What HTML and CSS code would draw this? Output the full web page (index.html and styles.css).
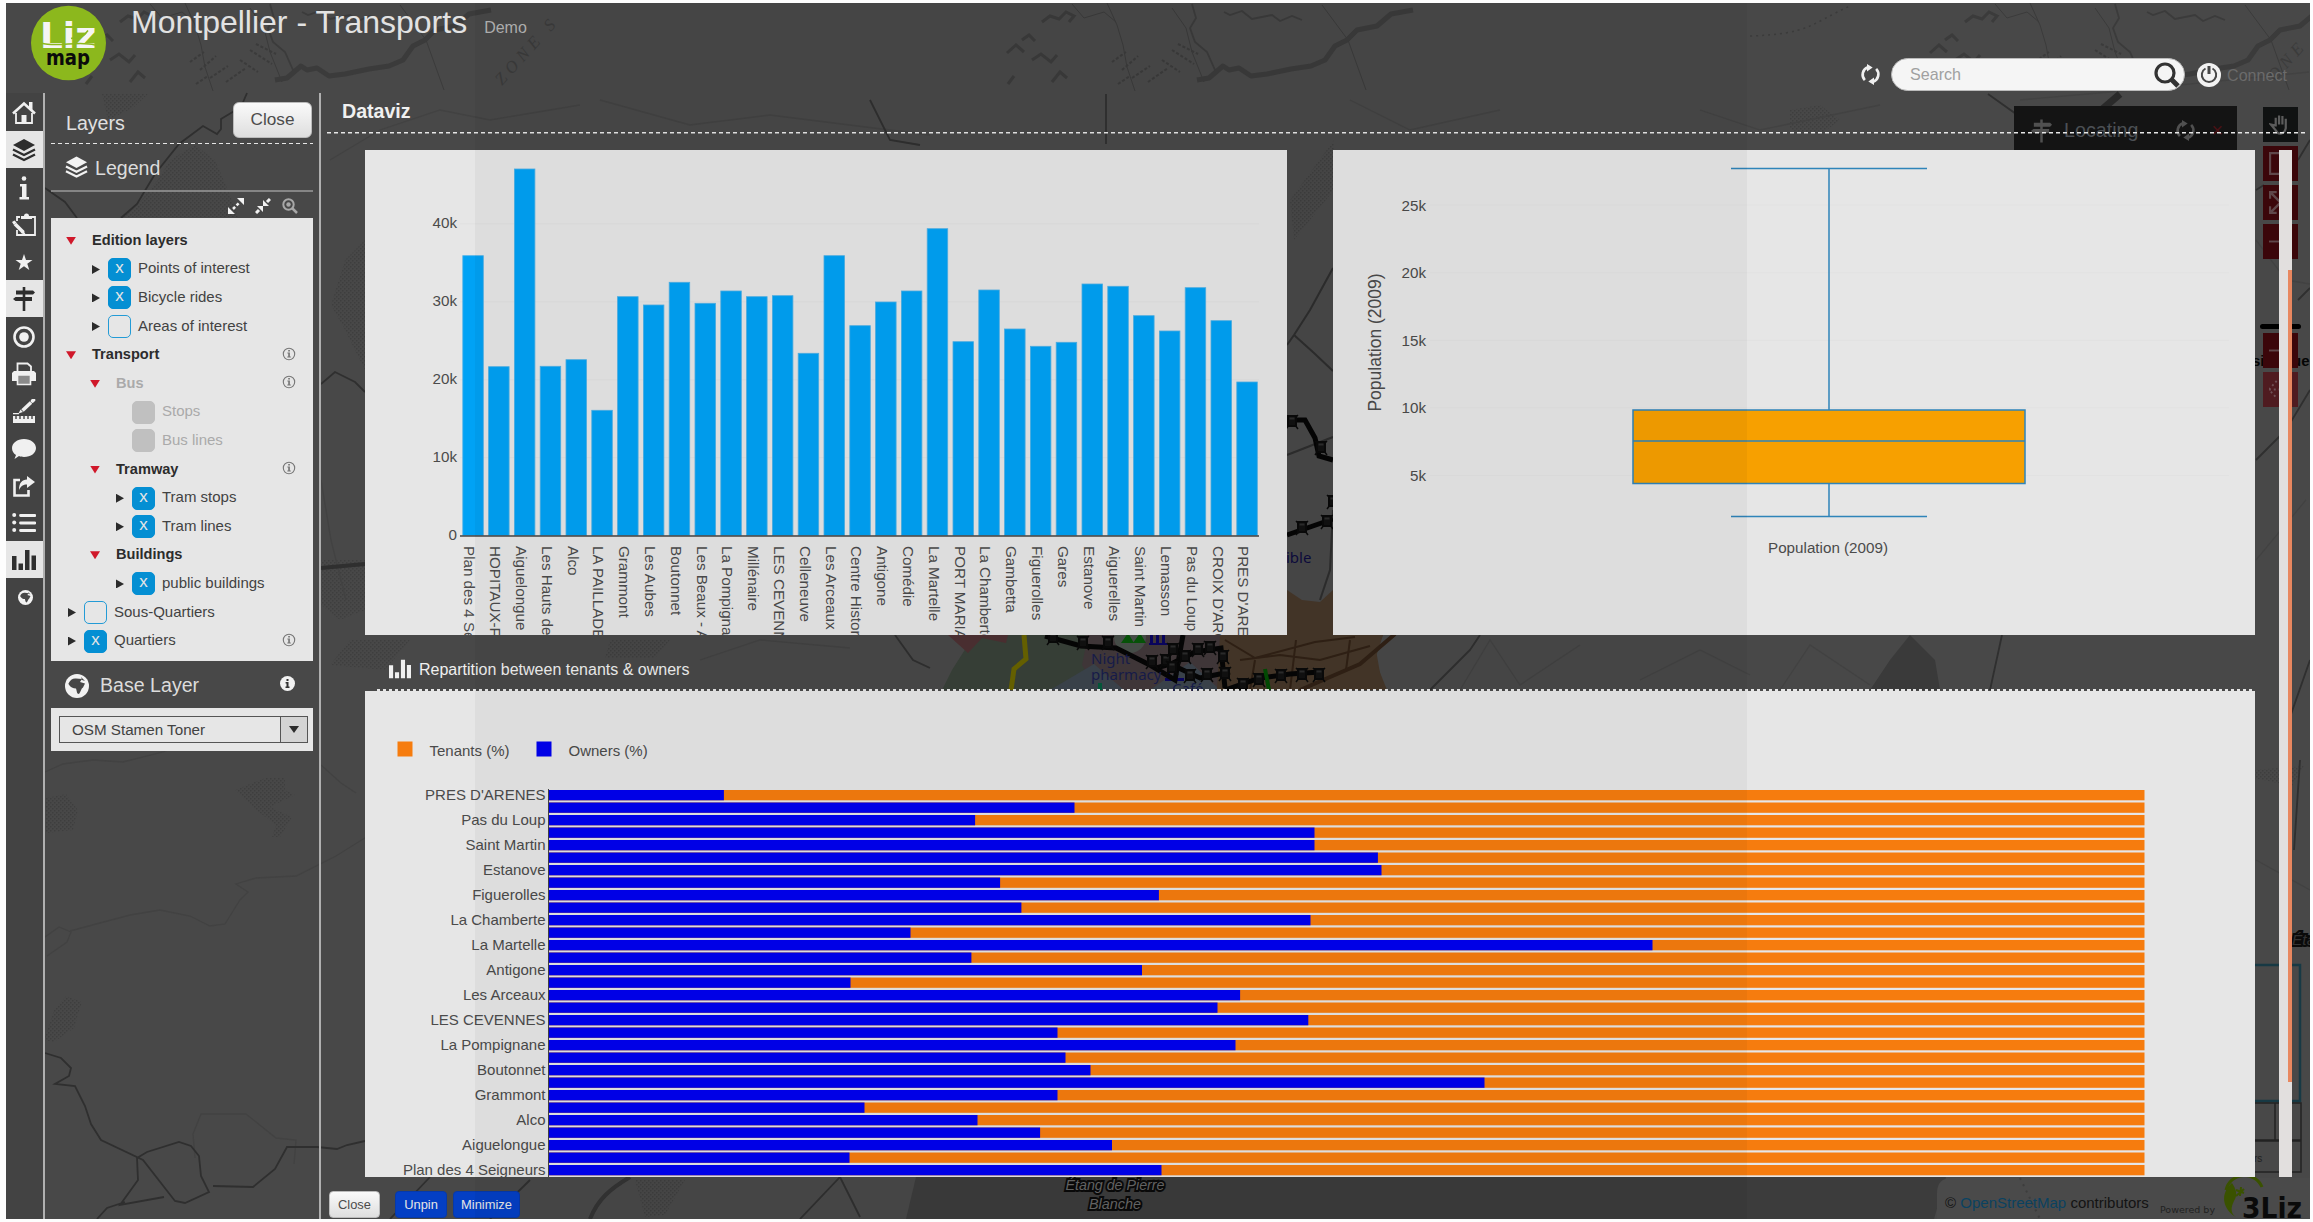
FILE: index.html
```html
<!DOCTYPE html>
<html lang="en">
<head>
<meta charset="utf-8">
<title>Montpellier - Transports</title>
<link rel="stylesheet" href="styles.css">
</head>
<body>
<svg class="defs" width="0" height="0" aria-hidden="true">
  <symbol id="i-home" viewBox="0 0 24 24"><path d="M4 12v10h16V12" fill="none" stroke="currentColor" stroke-width="1.800"/><path d="M1 12.500 12 2.500l11 10" fill="none" stroke="currentColor" stroke-width="2.600"/><path d="M17 1h3.500v8L17 6zM9.500 14h5v8h-5z" fill="currentColor"/></symbol>
  <symbol id="i-layers" viewBox="0 0 24 24"><path d="M12 1 23 7 12 13 1 7z" fill="currentColor"/><path d="m1 11.500 11 5.500 11-5.500M1 16.500 12 22l11-5.500" fill="none" stroke="currentColor" stroke-width="2.300"/></symbol>
  <symbol id="i-info" viewBox="0 0 24 24"><circle cx="12" cy="2.500" r="2.300" fill="currentColor"/><path d="M8 8h6.500v13H17v2.500H7.500V21H10V10.500H8z" fill="currentColor"/></symbol>
  <symbol id="i-edit" viewBox="0 0 24 24"><path d="M8 4H5v4M5 17v5h18V4h-4" fill="none" stroke="currentColor" stroke-width="1.800"/><path d="M9 6V3h3a2.500 2.500 0 0 1 5 0h3v3z" fill="currentColor"/><path d="m3 11 8.500 8.500" stroke="currentColor" stroke-width="3.600"/><path d="m11 17 3 5-5-2zM0 9l2.500-1.500 2 2L2 12z" fill="currentColor"/></symbol>
  <symbol id="i-star" viewBox="0 0 24 24"><path d="m12 4 2 6h6.500L15.300 13.800l2 6.200L12 16.200 6.700 20l2-6.200L3.500 10H10z" fill="currentColor"/></symbol>
  <symbol id="i-sign" viewBox="0 0 24 24"><path d="M10.700 0h2.600v24h-2.600zM4 3.500h17l2 2-2 2H4zM1 12l2.500-2H20v4H3.500z" fill="currentColor"/></symbol>
  <symbol id="i-target" viewBox="0 0 24 24"><circle cx="12" cy="12" r="9.500" fill="none" stroke="currentColor" stroke-width="2.600"/><circle cx="12" cy="12" r="4.800" fill="currentColor"/></symbol>
  <symbol id="i-print" viewBox="0 0 24 24"><path d="M5.500 9V1.500h10l3.500 3V9" fill="none" stroke="currentColor" stroke-width="1.800"/><path d="M2 9h20l2 2v8h-5v-5H5v5H0v-8z" fill="currentColor"/><path d="M5.500 13h13v9.500h-13z" fill="#8a8a8a" stroke="currentColor" stroke-width="1.600"/></symbol>
  <symbol id="i-measure" viewBox="0 0 24 24"><path d="M1 17h22v7H1z" fill="currentColor"/><path d="M4 17v3m4-3v3m4-3v3m4-3v3m4-3v3" stroke="#444" stroke-width="1.400"/><path d="m10.500 11.500 8.500-8" stroke="currentColor" stroke-width="3.600"/><path d="m20.500 2 1-1" stroke="currentColor" stroke-width="3.600" stroke-linecap="round"/><path d="m6.500 14.500 2-4 2.500 2.500zM1 14h6v1.200H1z" fill="currentColor"/></symbol>
  <symbol id="i-bubble" viewBox="0 0 24 24"><path d="M12 2c6.800 0 12 4 12 9s-5 9-12 9c-2 0-3.500-.3-5-.9L2.500 22 4 18C1.500 16.400 0 14 0 11c0-5 5.200-9 12-9z" fill="currentColor"/></symbol>
  <symbol id="i-share" viewBox="0 0 24 24"><path d="M8 6H2.500v15.500h14V16" fill="none" stroke="currentColor" stroke-width="2.600"/><path d="M15 2l8 6-8 6v-3.500c-4 0-6 1.500-8 5.500 0-7 3-10.500 8-10.500z" fill="currentColor"/></symbol>
  <symbol id="i-list" viewBox="0 0 24 24"><path d="M8.500 4.500h14.500M8.500 12h14.500M8.500 19.500h14.500" stroke="currentColor" stroke-width="2.800" stroke-linecap="round"/><g fill="currentColor"><circle cx="2.200" cy="4" r="2"/><circle cx="2.200" cy="11.500" r="2"/><circle cx="2.200" cy="19" r="2"/></g></symbol>
  <symbol id="i-bars" viewBox="0 0 24 24"><path d="M0 8h4.500v14H0zM6.500 15.500h4.500V22H6.500zM13 2h4.500v20H13zM19.500 7.500H24V22h-4.500z" fill="currentColor"/></symbol>
  <symbol id="i-globe" viewBox="0 0 24 24"><circle cx="12" cy="12" r="12" fill="#f2f2f2"/><path d="M3.500 9.500C5 6 8 4 11 4.500l6 .5-2 3 5 1.500-2 4c-2 1-2 4-4 6.500-2.500 0-2-3-3-5.500-3 0-5.500-1-7.500-4.500zM16 3l4 4-3-1z" fill="#474747"/></symbol>
  <symbol id="i-refresh" viewBox="0 0 24 24"><path d="M9 3.800A9 9 0 0 0 5.500 18.500M15 20.200A9 9 0 0 0 18.500 5.500" fill="none" stroke="currentColor" stroke-width="3"/><path d="M8 0l6.500 4L8 8.500zM16 24l-6.500-4L16 15.500z" fill="currentColor"/></symbol>
  <symbol id="i-roundinfo" viewBox="0 0 14 14"><circle cx="7" cy="7" r="5.700" fill="none" stroke="currentColor" stroke-width="1.100"/><path d="M6.200 3h1.700v1.500H6.200zM5.400 5.600h2.500v3.900h.9v1H5.300v-1h.9V6.600h-.8z" fill="currentColor"/></symbol>
</svg>

<div class="app">
  <svg class="map" viewBox="6 3 2304 1216" aria-hidden="true">
    <defs>
      <pattern id="dots" width="4" height="4" patternUnits="userSpaceOnUse"><path d="M0 0h1.500v1.500H0zM2 2h1.500v1.500H2z" fill="#3e3e3e"/></pattern>
      <g id="train"><path d="M-4-6h8v10h-8z" stroke="#0a0a0a" stroke-width="2" fill="#111"/><path d="M-6 7l3-4M6 7 3 3M-6-7l3 3M6-7 3-4" stroke="#0a0a0a" stroke-width="1.500" fill="none"/><path d="M-2.500-4.500h5v2h-5z" fill="#2c2c2c"/></g>
      <g id="relief" fill="none" stroke="#3b3b3b">
        <path d="M120 22l8-6 9 3 7-7 8 4-5 6M100 40l7-5 6 6m-28 12 9-8 8 7M110 60l9-6 10 8 6-7M130 82l8-10 7 6M86 84l6-8" stroke-width="3"/>
        <path d="M185 3l10 22 6 20 4 22 8 24M250 8l14 20 6 24 12 30M400 5l26 35 18 50M150 4l12 14 20-6 12 10" stroke-width="1"/>
        <path d="M275 80l12-2 14-12 6 4 10-2 12 8 16-2 24-5 20-3 14-6 10-14 12-6 10-10 20-4 14-12 22-4" stroke-width="5" stroke-linejoin="round"/>
        <path d="M302 12l6 3 12-4 10 8 20-4 8 6 12-5 10 4M270 4l4 14-6 10 5 14 12 10 8 18" stroke-width="1.800"/>
        <path d="M190 62l14-10M200 70l16-14M210 78l18-12M226 82l20-14M196 84l12-8M240 60l18 12M250 50l22 14M256 44l20 10" stroke-width="2" stroke-dasharray="3 2"/>
      </g>
    </defs>
    <rect x="6" y="3" width="2304" height="1216" fill="#484848"/>
    <g class="header-relief">
      <use href="#relief"/><use href="#relief" x="922"/><use href="#relief" x="1845"/>
      <text class="relief-name" transform="translate(502 86) rotate(-48)">ZONE S</text>
      <text class="relief-name" transform="translate(2275 82) rotate(-48)">ONE</text>
      <path d="M1750 36c60-2 60-12 100-30" fill="none" stroke="#3b3b3b" stroke-width="1.500" stroke-dasharray="2 4"/>
    </g>
    <g fill="url(#dots)">
      <path d="M170 160l25-15 20 15 15 35 8 22H120l20-15 20-25zM102 94h46l-15 14-25 12z"/>
      <path d="M345 260l20-20v130l-20-40-14-25zM321 560h44v50l-25 10-19-15zM1790 110l30-5 20 15-20 15-30-5zM1290 200l44-60v50l-40 50z"/>
      <path d="M46 798l20-4 12 16-5 20-27 3zM235 790l30-12 20 0v12l10 5-25 12 22 10-12 20-8 0 4-12-20-15zM54 1010l12-14 16 6-8 26-20 14-10-2zM350 640h60l-25 30-55-5zM610 640h60l-15 18-50 0z"/>
      <path d="M635 1180h50l-20 35-20 2zM2254 770l50-4-12 20-38-8z"/>
    </g>
    <g fill="none" stroke="#424242" stroke-width="1.300">
      <path d="M45 772l18-8 30-4 30 2 40-10 40-15M45 937l14-10 12 5-4 10-20 14M70 931l60-16 30-5 30 6 20 10 15-2 15-24 8-8-12-8 20-6 40-2 40-20 40-25 26-15M321 765l20 18 15 10M246 1114l-45 0-8 20 2 24M246 1114l30 24 20 2-2 24M321 480l10 60 15 60M700 660l60-20 90 8M1460 690l30-50 30 45 60-40M1640 680l60-30 50 25M1780 690l30-45 60 40M2256 560l50-60M2256 860l54 30M2256 240l30 40 24 4"/>
      <path d="M330 160l50-30 60-20 50 10 90-15M600 100l90 25 80-10 160 20M1350 100l60 30 90-20M1700 110l60 20 120-25M2020 100l90-8 199-20"/>
    </g>
    <g fill="none" stroke="#2f2f2f" stroke-width="1.800">
      <path d="M247 93l-6 14-20 12 0 10-4 5-14-8-24 18-24 30-18 30-16 14M45 188l20 14 12 16M45 1053l16 5 10 10-2 8-14 8 20 2 10 20 6 18 10 16 42 20 32 41 10 2 24-11-8-16-2-20-8-10-12-4-32 10-10 6 1 22-18 25 44-8M125 1202l-18 6-10 11M213 1186l40 1 22-18 12-22 30 0 20 2 10-4 18-4"/>
      <path d="M321 384l14-12 20 10 10 10M870 100l20 40 30 5M1106 94l0 50M895 635l18 25 17 8M1430 690l40-40 10-15M1990 690l12-55M1988 94l35 25 20 31M2256 190l8-5M2298 160l12-20M2298 300l12-12M2256 460l30-30 24-40M2282 740l28-80M2300 760l-6 90M390 1219l40-42M530 1180l-40 39M800 1219l40-42 20 40"/>
      <path d="M321 568l44-4" stroke-width="4"/>
    </g>
    <path d="M590 1219c8-20 20-30 40-42" fill="none" stroke="#333" stroke-width="4"/>
    <path d="M2120 94l-70 60" stroke="#2a2a2a" stroke-width="7"/>
    <path d="M1870 690l20-30 20-25 25 25 5 30z" fill="#3a3a3a"/>
    <path d="M906 1219l10-42h1030l-12 42z" fill="#3c3c3c"/>
    <g fill="none" stroke="#2d2d2d" stroke-width="2"><path d="M1287 345l7-10 16-25 23-42M1294 335l20 18 19 18M1287 455l46-18M1320 600l10-30 3-60"/></g>
    <g fill="none" stroke="#050505" stroke-width="5"><path d="M1287 420h18l10 18 4 18 14 4M1287 535l46-16"/></g>
    <use href="#train" x="1292" y="422"/><use href="#train" x="1321" y="448"/><use href="#train" x="1302" y="528"/><use href="#train" x="1327" y="522"/><use href="#train" x="1333" y="502"/>
    <text class="place" x="1286" y="563">ible</text>
    <path d="M1287 590l15 10 18 2 13-12v45h50l-7 15 7 40h-170V600z" fill="#453729"/>
    <path d="M950 635h260v55H942l10-20 14-22z" fill="#394139"/>
    <path d="M948 635h60l-2 8-24-5-14 15z" fill="#4d3032"/>
    <path d="M1085 635h150l-10 20 12 35h-140l-15-25 4-20z" fill="#42393b"/>
    <path d="M1050 690l44-26 30 26z" fill="#3c444c"/><path d="M1150 690l40-28 30 28z" fill="#3c444c"/>
    <path d="M1220 635h163l-8 25 12 30h-170z" fill="#453729"/>
    <g fill="none" stroke="#302115" stroke-width="2"><path d="M1225 640l30 18 60-16 40-5M1240 660l40-5 40 5 50-14M1250 690l5-30M1290 690l6-50M1350 640l-4 30"/><path d="M1300 690l60-26 35-30" stroke-width="4"/></g>
    <path d="M1024 635l2 24-12 10-3 21" fill="none" stroke="#696300" stroke-width="5"/>
    <circle cx="1130" cy="637" r="16" fill="#48504a"/>
    <path d="M1121 643l7-10 6 10zM1133 643l7-10 6 10z" fill="#075609"/><path d="M1098 690v-7h4v7z" fill="#045a3c"/>
    <path d="M1149 643h22v2h-22zm1-8h3v8h-3zm6 0h3v8h-3zm6 0h3v8h-3zM1165 678h19v3h-19zm2-10h3v10h-3z" fill="#0a0560"/>
    <path d="M1045 636l36 10 35 2 20 10 20 10 15-4 24-12 26-4 4 40M1170 664l30 14 30-6M1225 690l35-12 30-4 30-2M1150 665l25 15 8-45" fill="none" stroke="#060606" stroke-width="5"/>
    <text class="place place-small" x="1091" y="664">Night</text><text class="place place-small" x="1091" y="680">pharmacy</text><text class="place place-small" x="1172" y="694">Café</text>
    <g><use href="#train" x="1053" y="638"/><use href="#train" x="1083" y="643"/><use href="#train" x="1108" y="643"/><use href="#train" x="1152" y="662"/><use href="#train" x="1166" y="661"/><use href="#train" x="1173" y="650"/><use href="#train" x="1185" y="657"/><use href="#train" x="1198" y="650"/><use href="#train" x="1210" y="648"/><use href="#train" x="1223" y="657"/><use href="#train" x="1225" y="674"/><use href="#train" x="1190" y="676"/><use href="#train" x="1207" y="675"/><use href="#train" x="1172" y="668"/><use href="#train" x="1243" y="685"/><use href="#train" x="1259" y="680"/><use href="#train" x="1281" y="676"/><use href="#train" x="1302" y="675"/><use href="#train" x="1319" y="675"/></g>
    <path d="M1265 669l4 21" stroke="#034c04" stroke-width="4"/>
    <g class="water-name"><text x="1115" y="1190" textLength="99" lengthAdjust="spacingAndGlyphs">Étang de Pierre</text><text x="1115" y="1209" textLength="52" lengthAdjust="spacingAndGlyphs">Blanche</text></g>
    <text class="water-name water-edge" x="2292" y="945">Éta</text>
    <text class="town" x="2252" y="366">si</text><text class="town" x="2292" y="366">ue</text>
    <g fill="none"><path d="M2250 965h50v136h-50" stroke="#173944" stroke-width="2.500"/><path d="M2250 1103h51v37h-51m25-37v37M2250 1141h51v31h-51" stroke="#222" stroke-width="1.500"/></g>
    <text class="scale-name" x="2254" y="1162">rs</text>
    <path d="M1937 1219v-26q0-15 15-15h358v41z" fill="#4a4a4a"/>
    <path d="M2020 1178l20 41" stroke="#3d3d3d" stroke-width="2" stroke-dasharray="2 5"/>
    <path d="M2236 1217c-14-8-16-24-4-34 4 6 6 12 2 18-3 6-4 12 2 16z" fill="#3a5200"/><path d="M2226 1190a19 19 0 0 1 36-3" fill="none" stroke="#3a5200" stroke-width="3"/><path d="m2236 1190 8 3m-3-6-1 9m4-7-8 7" stroke="#3a5200" stroke-width="2"/>
    <text class="brand-foot" x="2242" y="1218" textLength="60" lengthAdjust="spacingAndGlyphs">3Liz</text>
  </svg>

  <div class="locating"><svg class="locate-sign"><use href="#i-sign"/></svg><span>Locating</span><svg class="locate-refresh"><use href="#i-refresh"/></svg><b>×</b></div>
  <div class="tools">
    <i class="tool hand"><svg viewBox="0 0 24 24"><path d="M7 14V5m3.500 7V2.500M14 12V3m3.500 10V6M7 13l-5-1 5 6c2 5 9 5 10.500-2v-3" fill="none" stroke="#5c5c5c" stroke-width="2.300"/></svg></i>
    <i class="tool"><svg viewBox="0 0 24 24"><path d="M1 1h22v22H1z" fill="none" stroke="#60474a" stroke-width="2.500"/></svg></i>
    <i class="tool"><svg viewBox="0 0 24 24"><path d="M1 8V1h7M16 1h7v7M1 16v7h7m8 0h7v-7M2 2l20 20M22 2 2 22" fill="none" stroke="#60474a" stroke-width="2.500"/></svg></i>
    <i class="tool"><svg viewBox="0 0 24 24"><path d="M0 12h24" stroke="#60474a" stroke-width="2"/></svg></i>
    <i class="tool-bar"></i>
    <i class="tool"><svg viewBox="0 0 24 24"><path d="M0 12h24" stroke="#60474a" stroke-width="2"/></svg></i>
    <i class="tool pale"><svg viewBox="0 0 24 24"><path d="M0 12h24M8 3 0 12l8 9" fill="none" stroke="#705055" stroke-width="2" stroke-dasharray="2 3"/></svg></i>
  </div>

  <header class="header">
    <svg class="logo" viewBox="0 0 75 75"><ellipse cx="37.500" cy="37.500" rx="37.500" ry="37.300" fill="#8cb81d"/><text class="logo-liz" x="9" y="42" textLength="56" lengthAdjust="spacingAndGlyphs">Liz</text><path d="M10 37.500c18 5 36-3 54 2" fill="none" stroke="#8cb81d" stroke-width="1.500"/><path d="M40 33c6-2 10 2 17-8" fill="none" stroke="#8cb81d" stroke-width="1.500"/><text class="logo-map" x="15" y="59" textLength="44" lengthAdjust="spacingAndGlyphs">map</text></svg>
    <div class="titles"><h1>Montpellier - Transports</h1><span>Demo</span></div>
    <div class="header-tools">
      <svg class="refresh"><use href="#i-refresh"/></svg>
      <div class="search"><span>Search</span><svg viewBox="0 0 26 26"><circle cx="11" cy="11" r="9" fill="none" stroke="#333" stroke-width="3.200"/><path d="m17 17 7 7" stroke="#333" stroke-width="5"/></svg></div>
      <svg class="power" viewBox="0 0 24 24"><circle cx="12" cy="12" r="12" fill="#f2f2f2"/><path d="M8.500 5.500a7.200 7.200 0 1 0 7 0" fill="none" stroke="#474747" stroke-width="2"/><path d="M12 3v8" stroke="#474747" stroke-width="3"/></svg>
      <span class="connect">Connect</span>
    </div>
  </header>

  <div class="body">
    <nav class="dock">
      <a><svg><use href="#i-home"/></svg></a>
      <a class="on"><svg><use href="#i-layers"/></svg></a>
      <a><svg><use href="#i-info"/></svg></a>
      <a><svg><use href="#i-edit"/></svg></a>
      <a><svg><use href="#i-star"/></svg></a>
      <a class="on"><svg><use href="#i-sign"/></svg></a>
      <a><svg><use href="#i-target"/></svg></a>
      <a><svg><use href="#i-print"/></svg></a>
      <a><svg><use href="#i-measure"/></svg></a>
      <a><svg><use href="#i-bubble"/></svg></a>
      <a><svg><use href="#i-share"/></svg></a>
      <a><svg><use href="#i-list"/></svg></a>
      <a class="on"><svg><use href="#i-bars"/></svg></a>
      <a class="small"><svg><use href="#i-globe"/></svg></a>
    </nav>

    <aside class="panel">
      <div class="panel-head"><span>Layers</span><button class="btn">Close</button></div>
      <div class="legend-head"><svg><use href="#i-layers"/></svg><span>Legend</span></div>
      <div class="tree-tools">
        <svg viewBox="0 0 16 16"><path d="m5 11 6-6" stroke="#f2f2f2" stroke-width="2.500" stroke-dasharray="3 2"/><path d="M9 0h7v7zM0 9v7h7z" fill="#f2f2f2"/></svg>
        <svg viewBox="0 0 16 16"><path d="M1 15l3-3m8-8 3-3" stroke="#f2f2f2" stroke-width="3"/><path d="M8 2v6h6zM2 8h6v6z" fill="#f2f2f2"/></svg>
        <svg viewBox="0 0 16 16"><circle cx="6.500" cy="6.500" r="5.200" fill="none" stroke="#a8a8a8" stroke-width="2"/><circle cx="6.500" cy="6.500" r="2.200" fill="#a8a8a8"/><path d="m10 10 5 5" stroke="#a8a8a8" stroke-width="2.500"/></svg>
      </div>
      <div class="tree">
        <div class="row group l0"><i class="open"></i><b>Edition layers</b></div>
        <div class="row l1"><i class="shut"></i><u class="on">x</u><span>Points of interest</span></div>
        <div class="row l1"><i class="shut"></i><u class="on">x</u><span>Bicycle rides</span></div>
        <div class="row l1"><i class="shut"></i><u></u><span>Areas of interest</span></div>
        <div class="row group l0"><i class="open"></i><b>Transport</b><svg><use href="#i-roundinfo"/></svg></div>
        <div class="row group l1 off"><i class="open"></i><b>Bus</b><svg><use href="#i-roundinfo"/></svg></div>
        <div class="row l2 off"><i></i><u></u><span>Stops</span></div>
        <div class="row l2 off"><i></i><u></u><span>Bus lines</span></div>
        <div class="row group l1"><i class="open"></i><b>Tramway</b><svg><use href="#i-roundinfo"/></svg></div>
        <div class="row l2"><i class="shut"></i><u class="on">x</u><span>Tram stops</span></div>
        <div class="row l2"><i class="shut"></i><u class="on">x</u><span>Tram lines</span></div>
        <div class="row group l1"><i class="open"></i><b>Buildings</b></div>
        <div class="row l2"><i class="shut"></i><u class="on">x</u><span>public buildings</span></div>
        <div class="row l0"><i class="shut"></i><u></u><span>Sous-Quartiers</span></div>
        <div class="row l0"><i class="shut"></i><u class="on">x</u><span>Quartiers</span><svg><use href="#i-roundinfo"/></svg></div>
      </div>
      <div class="base-head"><svg class="globe"><use href="#i-globe"/></svg><span>Base Layer</span><svg class="dot" viewBox="0 0 15 15"><circle cx="7.500" cy="7.500" r="7.500" fill="#f2f2f2"/><path d="M6.500 3h2v2h-2zM5.600 6h2.900v4.500h1V12h-4v-1.500h1v-3h-.9z" fill="#333"/></svg></div>
      <div class="base-box"><div class="select"><span>OSM Stamen Toner</span><i></i></div></div>
    </aside>

    <main class="dataviz">
      <h2>Dataviz</h2>
      <div class="scroller">
        <div class="plots">
          <div class="plot-row">
            <svg class="plot" id="bars" viewBox="365 150 922 485"></svg>
            <svg class="plot" id="box" viewBox="1333 150 922 485"></svg>
          </div>
          <div class="plot-title"><svg><use href="#i-bars"/></svg><span>Repartition between tenants &amp; owners</span></div>
          <svg class="plot wide" id="share" viewBox="365 691 1890 486"></svg>
        </div>
        <div class="scrollbar"><i></i></div>
      </div>
      <footer class="foot">
        <button class="btn">Close</button><button class="btn blue">Unpin</button><button class="btn blue">Minimize</button>
        <p class="credits">© <a>OpenStreetMap</a> contributors <small>Powered by</small></p>
      </footer>
    </main>
  </div>
  <div class="tile-shade"></div>
</div>
<script src="charts.js"></script>
</body>
</html>
```
FILE: styles.css
```css
* { box-sizing: border-box; }
body { margin: 0; background: #fdfdfd; font-family: "Liberation Sans", Arial, sans-serif; overflow: hidden; }
.defs { position: absolute; }
.app { position: relative; width: 2304px; height: 1216px; margin: 3px 0 0 6px; background: #484848; overflow: hidden; color: #f0f0f0; display: flex; flex-direction: column; }
.map { position: absolute; inset: 0; width: 2304px; height: 1216px; }
.tile-shade { position: absolute; left: 469px; top: 0; width: 1272px; height: 1216px; background: rgba(0, 0, 0, .04); }
.relief-name { font: italic 17px "Liberation Serif", serif; letter-spacing: 5px; fill: #3b3b3b; }
.place { font: 15px "Noto Sans", sans-serif; fill: #0d0b3e; }
.place-small { font-size: 15px; fill: #181d4b; }
.water-name { font: italic 15.500px "Liberation Sans", sans-serif; text-anchor: middle; fill: #666; stroke: #0a0a0a; stroke-width: 4px; paint-order: stroke; }
.water-edge { text-anchor: start; fill: #333; }
.town { font: bold 15px "Liberation Sans", sans-serif; fill: #050505; }
.scale-name { font: 10px "Liberation Sans", sans-serif; fill: #222; }
.brand-foot { font: bold 28px "DejaVu Sans", sans-serif; fill: #0a0a0a; }

.locating { position: absolute; left: 2008px; top: 103px; width: 223px; height: 45px; background: #141414; color: #4c5055; display: flex; align-items: center; padding: 4px 14px 0 16px; font-size: 19.700px; }
.locating .locate-sign { width: 23px; height: 24px; color: #505050; margin-right: 11px; }
.locating .locate-refresh { width: 21px; height: 21px; color: #505050; margin-left: 37px; }
.locating b { color: #4a1114; font-weight: normal; margin-left: 15px; }
.tools { position: absolute; left: 2257px; top: 104px; width: 35px; display: flex; flex-direction: column; gap: 4px; }
.tool { height: 35px; background: #3b060a; display: flex; align-items: center; justify-content: center; }
.tool svg { width: 23px; height: 23px; }
.tool.hand { background: #101212; }
.tool.pale { background: #4f1b20; }
.tool-bar { height: 5px; margin: 61px -3px 0; border-radius: 3px; background: #000; }

.header { position: relative; height: 90px; flex: none; display: flex; padding-left: 25px; }
.logo { width: 75px; height: 76px; margin-top: 2px; }
.logo-liz { font: bold 35px "DejaVu Sans", sans-serif; fill: #f5f5f5; }
.logo-map { font: bold 21px "DejaVu Sans", sans-serif; fill: #0b0b0b; }
.titles { display: flex; align-items: baseline; margin-left: 25px; height: 40px; }
.titles h1 { margin: 1px 0 0; font-size: 32px; line-height: 36px; font-weight: normal; color: #e2e2e2; }
.titles span { font-size: 16px; margin-left: 17px; color: #b4b4b4; }
.header-tools { margin: 55px 23px 0 auto; height: 33px; display: flex; align-items: center; }
.refresh { width: 21px; height: 23px; margin-right: 10px; }
.search { width: 294px; height: 33px; border-radius: 17px; background: #f5f5f5; border: 1px solid #bbb; display: flex; align-items: center; justify-content: space-between; padding: 0 4px 0 18px; color: #a0a0a0; font-size: 16.100px; }
.search svg { width: 26px; height: 26px; }
.power { width: 24px; height: 24px; margin: 0 6px 0 12px; }
.connect { font-size: 16.100px; color: #6b6b6b; padding-top: 1px; }

.body { position: relative; flex: 1; display: flex; min-height: 0; }
.dock { width: 39px; flex: none; border-right: 2px solid #b0b0b0; background: #434343; padding-top: .5px; }
.dock a { display: flex; height: 37.270px; align-items: center; justify-content: center; padding: 2px 1px 0 0; }
.dock svg { width: 24px; height: 24px; }
.dock .on { background: #e6e6e6; color: #2e2e2e; }
.dock .small svg { width: 15px; height: 15px; }
.dock .small { padding-left: 3px; }

.panel { width: 276px; flex: none; border-right: 2px solid #b0b0b0; padding: 0 6px; }
.panel-head { height: 51px; display: flex; align-items: center; justify-content: space-between; padding-left: 15px; font-size: 19.600px; background: repeating-linear-gradient(90deg, #e6e6e6 0 4px, transparent 4px 7px) 0 49.500px / 100% 1.500px no-repeat; color: #e0e0e0; }
.panel-head span { padding-top: 9px; }
.btn { font-family: inherit; color: #4c4c4c; border: 1px solid #bbb; background: linear-gradient(#fafafa, #dedede); border-radius: 4px; padding: 0; }
.panel-head .btn { width: 79px; height: 36px; font-size: 17.200px; border-radius: 6px; margin: 2px 1px 0 0; }
.legend-head { height: 48px; border-bottom: 2px solid #858585; display: flex; align-items: center; padding-left: 14px; font-size: 19.600px; color: #dcdcdc; }
.legend-head svg { width: 23px; height: 24px; margin-right: 7px; color: #f2f2f2; }
.legend-head span { padding-top: 2px; }
.tree-tools { height: 26px; display: flex; justify-content: flex-end; gap: 11px; padding: 6px 15px 0 0; }
.tree-tools svg { width: 16px; height: 16px; }
.tree { background: #e6e6e6; height: 443px; padding-top: 7px; color: #424242; font-size: 15px; }
.row { height: 28.600px; display: flex; align-items: center; }
.row.l0 { padding-left: 17px; }
.row.l1 { padding-left: 41px; }
.row.l2 { padding-left: 65px; }
.row.group { padding-left: 15px; }
.row.group.l1 { padding-left: 39px; }
.row i { width: 8px; height: 9px; margin-right: 8px; flex: none; }
.row .shut { background: #2b2b2b; clip-path: polygon(0 0, 100% 50%, 0 100%); margin-top: 3px; }
.row .open { width: 10px; height: 8px; background: #d0182a; clip-path: polygon(0 0, 100% 0, 50% 100%); margin: 3px 16px 0 0; }
.row u { width: 23px; height: 23px; border: 1.500px solid #239bd6; border-radius: 5px; text-decoration: none; color: #e6e6e6; font-size: 17px; line-height: 18px; text-align: center; margin: 3px 7px 0 0; }
.row u.on { background: #048fd3; border-color: #048fd3; }
.row b { font-size: 14.600px; color: #2c2c2c; padding-top: 1px; }
.row.off b, .row.off span { color: #aaa; }
.row.off u { background: #c0c0c0; border-color: #c0c0c0; }
.row svg { width: 14px; height: 14px; margin: 0 17px 0 auto; color: #777; }
.base-head { height: 47px; display: flex; align-items: center; padding: 2px 18px 0 14px; color: #dcdcdc; font-size: 19.600px; }
.base-head .globe { width: 24px; height: 24px; margin-right: 11px; }
.base-head .dot { width: 15px; height: 15px; margin: -4px 0 0 auto; }
.base-box { height: 43px; background: #e6e6e6; padding: 8px 5px 8px 8px; }
.select { height: 27px; border: 1px solid #555; display: flex; align-items: center; color: #424242; font-size: 15.200px; padding-left: 12px; }
.select i { width: 27px; height: 25px; margin-left: auto; border-left: 1px solid #555; background: #d4d4d4; display: flex; align-items: center; justify-content: center; }
.select i::before { content: ""; border: 5px solid transparent; border-top: 7px solid #2b2b2b; border-bottom: 0; }

.dataviz { flex: 1; min-width: 0; display: flex; flex-direction: column; }
.dataviz h2 { margin: 0 4px 0 6px; height: 41px; padding: 6px 0 0 15px; font-size: 19.600px; line-height: 24px; flex: none; background: repeating-linear-gradient(90deg, #e6e6e6 0 4px, transparent 4px 7px) 0 38.500px / 100% 1.500px no-repeat; }
.scroller { margin: 16px 0 0 44px; height: 1027px; flex: none; display: flex; gap: 24px; overflow: hidden; }
.plots { width: 1890px; }
.plot-row { display: flex; justify-content: space-between; height: 485px; }
.plot { display: block; width: 922px; height: 485px; background: #e6e6e6; }
.plot.wide { width: 1890px; height: 486px; }
.plot-title { height: 56px; display: flex; align-items: center; padding-left: 23px; font-size: 16px; background: repeating-linear-gradient(90deg, #e6e6e6 0 3.500px, transparent 3.500px 6px) 12px 54px / 100% 2px no-repeat; }
.plot-title svg { width: 24px; height: 22px; margin: 12px 7px 0 0; }
.plot-title span { padding-top: 13px; }
.scrollbar { width: 13px; background: #e2dfde; padding: 120px 0 0 9px; }
.scrollbar i { display: block; width: 4px; height: 812px; background: #e8875f; }
.plot text { font: 15.200px "Liberation Sans", Arial, sans-serif; fill: #4b4b4b; }
.plot .end { text-anchor: end; }
.plot .mid { text-anchor: middle; }
.plot text.axis-title { font-size: 17.500px; }
.plot text.sm { font-size: 15px; }

.foot { display: flex; align-items: flex-start; padding: 14px 0 0 8px; }
.foot .btn { width: 51px; height: 27px; font-size: 12.900px; margin-right: 15px; }
.foot .btn.blue { width: 52px; color: #e6e6e6; background: #043fc4; border-color: #0739a8; margin-right: 6px; }
.foot .btn.blue + .blue { width: 67px; margin: 0; }
.credits { margin: 3px 0 0 auto; padding-right: 95px; font-size: 15px; line-height: 18px; color: #131313; white-space: nowrap; }
.credits a { color: #0a4261; }
.credits small { font: 9.500px "DejaVu Sans", sans-serif; color: #222; margin-left: 7px; position: relative; top: 5px; }
```
FILE: charts.js
```js
(function () {
  var NS = "http://www.w3.org/2000/svg";

  function add(svg, name, attrs, text) {
    var el = document.createElementNS(NS, name);
    for (var k in attrs) el.setAttribute(k, attrs[k]);
    if (text !== undefined) el.textContent = text;
    svg.appendChild(el);
  }

  // Population per district
  var districts = [
    ["Plan des 4 Seigneurs", 255.7], ["HOPITAUX-FACULTES", 366.7], ["Aiguelongue", 169],
    ["Les Hauts de Massane", 366.3], ["Alco", 359.7], ["LA PAILLADE", 410.3],
    ["Grammont", 296.7], ["Les Aubes", 305], ["Boutonnet", 282.3], ["Les Beaux - Arts", 303.3],
    ["La Pompignane", 291], ["Millénaire", 296.7], ["LES CEVENNES", 295.7],
    ["Celleneuve", 353.3], ["Les Arceaux", 255.7], ["Centre Historique", 325.7],
    ["Antigone", 302], ["Comédie", 291], ["La Martelle", 228.7], ["PORT MARIANNE", 341.7],
    ["La Chamberte", 290], ["Gambetta", 329], ["Figuerolles", 346.3], ["Gares", 342.3],
    ["Estanove", 284], ["Aiguerelles", 286.3], ["Saint Martin", 315.7], ["Lemasson", 331],
    ["Pas du Loup", 287.7], ["CROIX D'ARGENT", 320.7], ["PRES D'ARENES", 382]
  ];
  var bars = document.getElementById("bars");
  ["0", "10k", "20k", "30k", "40k"].forEach(function (t, i) {
    var y = 535.5 - 77.9 * i;
    add(bars, "path", { d: "M460 " + y + "h799", stroke: "#e0e0e0" });
    add(bars, "text", { x: 457, y: y + 4.5, "class": "end" }, t);
  });
  districts.forEach(function (d, i) {
    var x = 462.8 + 25.8 * i;
    add(bars, "rect", { x: x, y: d[1], width: 20.5, height: 535.5 - d[1], fill: "#00a2f5", stroke: "#4db1e8", "stroke-width": 0.8 });
    add(bars, "text", { transform: "translate(" + (x + 1.6) + " 546) rotate(90)" }, d[0]);
  });
  add(bars, "path", { d: "M460 536h799", stroke: "#444", "stroke-width": 1.3 });

  // Box plot of the same population
  var box = document.getElementById("box");
  ["5k", "10k", "15k", "20k", "25k"].forEach(function (t, i) {
    var y = 475.5 - 67.6 * i;
    add(box, "path", { d: "M1430 " + y + "h799", stroke: "#e2e2e2" });
    add(box, "text", { x: 1426, y: y + 5.5, "class": "end" }, t);
  });
  add(box, "rect", { x: 1633, y: 410, width: 392, height: 74, fill: "#f7a000" });
  add(box, "path", {
    d: "M1731 168.500h196M1829 168.500V410M1633 410h392v73.500h-392zM1633 441h392M1829 483.500V516.500M1731 516.500h196",
    fill: "none", stroke: "#2f84b9", "stroke-width": 1.5
  });
  add(box, "text", { x: 1828, y: 553, "class": "mid" }, "Population (2009)");
  add(box, "text", { transform: "translate(1380.500 342.500) rotate(-90)", "class": "mid axis-title" }, "Population (2009)");

  // Tenants and owners, end of the owners' share for each row
  var share = document.getElementById("share");
  var ends = [724.4, 1075, 975.6, 1315, 1315, 1378.4, 1382, 1000.6, 1159.4, 1021.9, 1311, 911,
    1653, 971.9, 1142.5, 851, 1240.6, 1218, 1308.8, 1058, 1236, 1066, 1091, 1485, 1058, 865,
    978, 1040.6, 1112.5, 850, 1162];
  var names = ["PRES D'ARENES", "Pas du Loup", "Saint Martin", "Estanove", "Figuerolles",
    "La Chamberte", "La Martelle", "Antigone", "Les Arceaux", "LES CEVENNES", "La Pompignane",
    "Boutonnet", "Grammont", "Alco", "Aiguelongue", "Plan des 4 Seigneurs"];
  add(share, "rect", { x: 397.5, y: 741.5, width: 15, height: 15, fill: "#f67c0e" });
  add(share, "text", { x: 429.5, y: 755.5, "class": "sm" }, "Tenants (%)");
  add(share, "rect", { x: 536.5, y: 741.5, width: 15, height: 15, fill: "#0000f0" });
  add(share, "text", { x: 568.5, y: 755.5, "class": "sm" }, "Owners (%)");
  ends.forEach(function (end, i) {
    var y = 790 + 12.5 * i;
    add(share, "rect", { x: 548.5, y: y, width: 1596, height: 10.3, fill: "#f67c0e" });
    add(share, "rect", { x: 548.5, y: y, width: end - 549, height: 10.3, fill: "#0000f0" });
  });
  names.forEach(function (n, i) {
    add(share, "text", { x: 545.5, y: 799.5 + 25 * i, "class": "end sm" }, n);
  });
  add(share, "path", { d: "M548.500 789v390", stroke: "#444" });
})();
```
